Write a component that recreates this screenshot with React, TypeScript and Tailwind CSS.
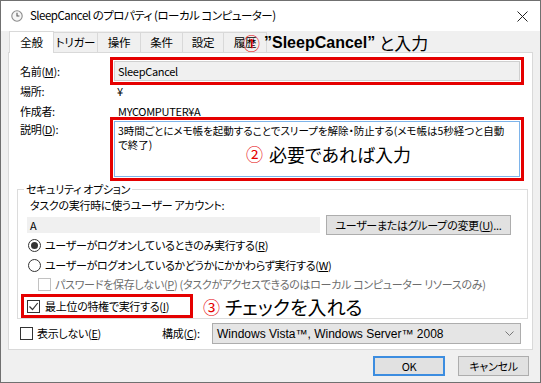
import React from "react";

function ClockIcon() {
  return (
    <svg width="12" height="12" viewBox="0 0 12 12">
      <circle cx="6" cy="6" r="5.2" fill="#f6f6f6" stroke="#8c8c8c" strokeWidth="1.1" />
      <path d="M6 2.8V6h2.4" fill="none" stroke="#5a5a5a" strokeWidth="1.1" />
    </svg>
  );
}

function Radio({ on }: { on?: boolean }) {
  return (
    <span className="flex h-[13px] w-[13px] shrink-0 items-center justify-center rounded-full border border-[#333] bg-white">
      {on && <span className="h-[7px] w-[7px] rounded-full bg-[#333]" />}
    </span>
  );
}

function Box({ on, off }: { on?: boolean; off?: boolean }) {
  return (
    <span
      className={`flex h-[13px] w-[13px] shrink-0 items-center justify-center border bg-white ${
        off ? "border-[#c2c2c2]" : "border-[#333]"
      }`}
    >
      {on && (
        <svg width="11" height="11" viewBox="0 0 11 11">
          <path d="M1.5 5.5l3 3 5.2-6.5" fill="none" stroke="#333" strokeWidth="1.2" />
        </svg>
      )}
    </span>
  );
}

const tabs = [
  { t: "トリガー", w: "w-[44px]" },
  { t: "操作", w: "w-[43px]" },
  { t: "条件", w: "w-[42px]" },
  { t: "設定", w: "w-[41px]" },
  { t: "履歴", w: "w-[43px]" },
];

export default function App() {
  return (
    <div className="relative flex h-[383px] w-[541px] flex-col overflow-hidden border border-[#707070] bg-[#f0f0f0] font-['Noto_Sans_CJK_JP','Noto_Sans',sans-serif] text-[11px] leading-none tracking-[-0.3px] text-black [font-feature-settings:'palt']">
      {/* title bar */}
      <div className="flex h-[30px] shrink-0 items-center bg-white pl-[10px] pr-[12px]">
        <ClockIcon />
        <span className="ml-[7px] text-[11.5px] tracking-[-0.5px]">SleepCancel のプロパティ (ローカル コンピューター)</span>
        <svg className="ml-auto" width="11" height="11" viewBox="0 0 11 11">
          <path d="M0.5 0.5l10 10M10.5 0.5l-10 10" stroke="#222" strokeWidth="1" />
        </svg>
      </div>

      {/* tabs */}
      <div className="flex h-[21px] shrink-0 items-end pl-[8px] text-[11.5px]">
        <div className="relative z-10 -mb-px flex h-[22px] w-[45px] items-center justify-center border border-b-0 border-[#d9d9d9] bg-white">
          全般
        </div>
        {tabs.map((x) => (
          <div
            key={x.t}
            className={`flex h-[20px] ${x.w} items-center justify-center border-t border-r border-[#d9d9d9]`}
          >
            {x.t}
          </div>
        ))}
      </div>

      {/* panel */}
      <div className="mx-[7px] flex h-[298px] shrink-0 flex-col border border-[#d9d9d9] bg-white pt-[8px] pl-[8px] pr-[4px]">
        <div className="flex h-[20px] items-center pl-[3px] pr-[8px]">
          <span className="w-[94px]">
            名前(<u>M</u>):
          </span>
          <div className="flex h-[20px] flex-1 items-center border border-[#cfcfcf] bg-[#f0f0f0] pl-[3px] outline-3 outline-offset-1 outline-[#e50000]">
            SleepCancel
          </div>
        </div>
        <div className="flex h-[20px] items-center pl-[3px] pr-[8px]">
          <span className="w-[94px]">場所:</span>
          <span className="pl-[3px]">¥</span>
        </div>
        <div className="flex h-[20px] items-center pl-[3px] pr-[8px]">
          <span className="w-[94px]">作成者:</span>
          <span className="pl-[4px]">MYCOMPUTER¥A</span>
        </div>
        <div className="flex items-start pl-[3px] pr-[8px]">
          <span className="w-[94px] leading-[16px]">
            説明(<u>D</u>):
          </span>
          <div className="relative h-[56px] flex-1 border border-[#7eb4ea] bg-white pl-[3px] pt-[2px] text-[10.5px] leading-[14px] tracking-normal outline-3 outline-offset-1 outline-[#e50000]">
            <div className="whitespace-nowrap">
              3時間ごとにメモ帳を起動することでスリープを解除・防止する(メモ帳は5秒経つと自動
            </div>
            <div className="whitespace-nowrap">で終了)</div>
            <div className="absolute left-[131px] top-[25px] flex items-center gap-[6px] whitespace-nowrap tracking-normal">
              <span className="text-[17px] text-[#e50000]">②</span>
              <span className="text-[18px]">必要であれば入力</span>
            </div>
          </div>
        </div>

        {/* security options */}
        <fieldset className="mt-[5px] min-w-0 border border-[#dcdcdc] pl-[6px] pr-[16px]">
          <legend className="px-[2px] leading-[14px]">セキュリティ オプション</legend>
          <div className="flex flex-col pl-[6px]">
            <div className="flex h-[18px] items-center">タスクの実行時に使うユーザー アカウント:</div>
            <div className="mt-[1px] flex h-[20px] items-center">
              <div className="-ml-[3px] flex h-[16px] w-[293px] items-center bg-[#f0f0f0] pl-[3px]">A</div>
              <div className="ml-auto flex h-[20px] w-[185px] items-center justify-center whitespace-nowrap border border-[#adadad] bg-[#e1e1e1]">
                ユーザーまたはグループの変更(<u>U</u>)...
              </div>
            </div>
            <div className="-ml-[2px] flex h-[20px] items-center gap-[4px]">
              <Radio on />
              <span>
                ユーザーがログオンしているときのみ実行する(<u>R</u>)
              </span>
            </div>
            <div className="-ml-[2px] flex h-[20px] items-center gap-[4px]">
              <Radio />
              <span>
                ユーザーがログオンしているかどうかにかかわらず実行する(<u>W</u>)
              </span>
            </div>
            <div className="flex h-[19px] items-center gap-[4px] pl-[8px] text-[#6d6d6d]">
              <Box off />
              <span className="whitespace-nowrap">
                パスワードを保存しない(<u>P</u>) (タスクがアクセスできるのはローカル コンピューター リソースのみ)
              </span>
            </div>
            <div className="flex h-[24px] items-center">
              <div className="-ml-[9px] flex h-[24px] w-[172px] items-center gap-[5px] border-[3px] border-[#e50000] pl-[3px]">
                <Box on />
                <span>
                  最上位の特権で実行する(<u>I</u>)
                </span>
              </div>
              <div className="ml-[10px] flex items-center gap-[5px] whitespace-nowrap tracking-normal">
                <span className="text-[17px] text-[#e50000]">③</span>
                <span className="text-[19px]">チェックを入れる</span>
              </div>
            </div>
          </div>
        </fieldset>

        {/* bottom row */}
        <div className="mt-[4px] flex h-[21px] items-center pl-[3px] pr-[7px]">
          <div className="flex w-[142px] items-center gap-[4px]">
            <Box />
            <span>
              表示しない(<u>E</u>)
            </span>
          </div>
          <span className="w-[50px]">
            構成(<u>C</u>):
          </span>
          <div className="flex h-[21px] flex-1 items-center border border-[#adadad] bg-[#e5e5e5] pl-[4px] pr-[6px] font-['Liberation_Sans',sans-serif] text-[12px] tracking-normal">
            <span>Windows Vista™, Windows Server™ 2008</span>
            <svg className="ml-auto" width="9" height="6" viewBox="0 0 9 6">
              <path d="M0.5 0.5l4 4 4-4" fill="none" stroke="#777" strokeWidth="1" />
            </svg>
          </div>
        </div>
      </div>

      {/* buttons */}
      <div className="mt-[6px] flex justify-end gap-[13px] pr-[11px]">
        <div className="flex h-[20px] w-[72px] items-center justify-center border-2 border-[#3c8de0] bg-[#e1e1e1]">
          OK
        </div>
        <div className="flex h-[20px] w-[71px] items-center justify-center border border-[#adadad] bg-[#e1e1e1]">
          キャンセル
        </div>
      </div>

      {/* annotation 1 */}
      <div className="absolute left-[242px] top-[33px] flex items-center gap-[4px] whitespace-nowrap tracking-normal">
        <span className="text-[17px] text-[#e50000]">①</span>
        <span className="font-['Liberation_Sans',sans-serif] text-[16px] font-bold">”SleepCancel”</span>
        <span className="text-[17px]">と入力</span>
      </div>
    </div>
  );
}
